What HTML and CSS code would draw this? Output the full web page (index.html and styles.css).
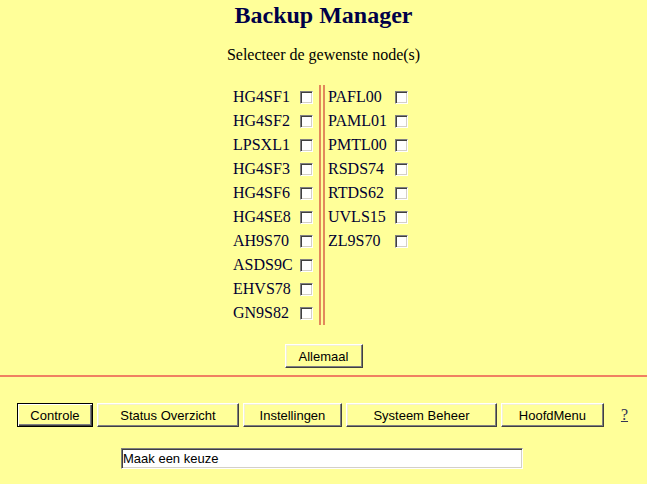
FILE: index.html
```html
<!DOCTYPE html>
<html>
<head>
<meta charset="utf-8">
<title>Backup Manager</title>
<link rel="stylesheet" href="styles.css">
</head>
<body>
<div class="page">
  <h1 class="title">Backup Manager</h1>
  <p class="subtitle">Selecteer de gewenste node(s)</p>
  <div class="nodes">
    <div class="col col-left">
      <label class="node"><span class="node-name">HG4SF1</span><input type="checkbox" class="check"></label>
      <label class="node"><span class="node-name">HG4SF2</span><input type="checkbox" class="check"></label>
      <label class="node"><span class="node-name">LPSXL1</span><input type="checkbox" class="check"></label>
      <label class="node"><span class="node-name">HG4SF3</span><input type="checkbox" class="check"></label>
      <label class="node"><span class="node-name">HG4SF6</span><input type="checkbox" class="check"></label>
      <label class="node"><span class="node-name">HG4SE8</span><input type="checkbox" class="check"></label>
      <label class="node"><span class="node-name">AH9S70</span><input type="checkbox" class="check"></label>
      <label class="node"><span class="node-name">ASDS9C</span><input type="checkbox" class="check"></label>
      <label class="node"><span class="node-name">EHVS78</span><input type="checkbox" class="check"></label>
      <label class="node"><span class="node-name">GN9S82</span><input type="checkbox" class="check"></label>
    </div>
    <div class="col col-right">
      <label class="node"><span class="node-name">PAFL00</span><input type="checkbox" class="check"></label>
      <label class="node"><span class="node-name">PAML01</span><input type="checkbox" class="check"></label>
      <label class="node"><span class="node-name">PMTL00</span><input type="checkbox" class="check"></label>
      <label class="node"><span class="node-name">RSDS74</span><input type="checkbox" class="check"></label>
      <label class="node"><span class="node-name">RTDS62</span><input type="checkbox" class="check"></label>
      <label class="node"><span class="node-name">UVLS15</span><input type="checkbox" class="check"></label>
      <label class="node"><span class="node-name">ZL9S70</span><input type="checkbox" class="check"></label>
    </div>
  </div>
  <div class="actions">
    <button class="btn btn-all">Allemaal</button>
  </div>
  <div class="divider"></div>
  <nav class="menu">
    <button class="btn btn-default btn-controle">Controle</button>
    <button class="btn btn-status">Status Overzicht</button>
    <button class="btn btn-instellingen">Instellingen</button>
    <button class="btn btn-systeem">Systeem Beheer</button>
    <button class="btn btn-hoofd">HoofdMenu</button>
    <a class="help" href="#">?</a>
  </nav>
  <div class="status">
    <input class="status-input" type="text" value="Maak een keuze">
  </div>
</div>
</body>
</html>
```

FILE: styles.css
```css
html, body {
  margin: 0;
  padding: 0;
  background: #ffff99;
}

.page {
  width: 647px;
  font-family: "Liberation Serif", "Times New Roman", serif;
  color: #000;
}

.title {
  margin: 0;
  padding-top: 1px;
  font-size: 24px;
  line-height: 28px;
  font-weight: bold;
  text-align: center;
  color: #000048;
}

.subtitle {
  margin: 17px 0 0;
  font-size: 16px;
  line-height: 18px;
  text-align: center;
}

.nodes {
  margin-top: 21px;
  display: flex;
  justify-content: center;
  align-items: flex-start;
}

.col {
  display: flex;
  flex-direction: column;
}

.col-left {
  width: 86px;
  height: 240px;
  border-right: 6px double #e2895c;
}

.col-right {
  width: 86px;
  padding-left: 3px;
}

.node {
  display: grid;
  grid-template-columns: 67px 13px;
  align-items: center;
  height: 24px;
}

.node-name {
  font-size: 16px;
  line-height: 24px;
  color: #000033;
  white-space: nowrap;
}

.check {
  appearance: none;
  -webkit-appearance: none;
  box-sizing: border-box;
  width: 13px;
  height: 13px;
  margin: 0;
  background: #fff;
  border: 1px solid;
  border-color: #808080 #ffffff #ffffff #808080;
  box-shadow: inset 1px 1px 0 #404040, inset -1px -1px 0 #d4d0c8;
}

.actions {
  margin-top: 19px;
  display: flex;
  justify-content: center;
}

.btn {
  box-sizing: border-box;
  height: 24px;
  margin: 0;
  padding: 0;
  font-family: "Liberation Sans", Arial, sans-serif;
  font-size: 13px;
  color: #000;
  background: #ffff99;
  border: 1px solid;
  border-color: #ffffff #404040 #404040 #ffffff;
  box-shadow: inset -1px -1px 0 #808080, inset 1px 1px 0 #f4f0d0;
}

.btn-all {
  width: 78px;
}

.btn-default {
  border: 1px solid #000;
  box-shadow: inset 1px 1px 0 #ffffff, inset -1px -1px 0 #404040, inset -2px -2px 0 #808080;
}

.btn-controle { width: 76px; }
.btn-status { width: 142px; }
.btn-instellingen { width: 99px; }
.btn-systeem { width: 151px; }
.btn-hoofd { width: 103px; }

.divider {
  margin-top: 7px;
  height: 2px;
  background: #f08062;
}

.menu {
  margin-top: 26px;
  padding-right: 2px;
  display: flex;
  justify-content: center;
  align-items: center;
  gap: 4px;
}

.help {
  margin-left: 13px;
  font-family: "Liberation Serif", "Times New Roman", serif;
  font-size: 16px;
  line-height: 18px;
  color: #333355;
  text-decoration: underline;
}

.status {
  margin-top: 21px;
  padding-right: 3px;
  display: flex;
  justify-content: center;
}

.status-input {
  box-sizing: border-box;
  width: 402px;
  height: 21px;
  margin: 0;
  padding: 0 1px;
  font-family: "Liberation Sans", Arial, sans-serif;
  font-size: 13px;
  color: #000;
  background: #fff;
  border: 1px solid;
  border-color: #808080 #ffffff #ffffff #808080;
  box-shadow: inset 1px 1px 0 #404040, inset -1px -1px 0 #d4d0c8;
  outline: none;
}
```
